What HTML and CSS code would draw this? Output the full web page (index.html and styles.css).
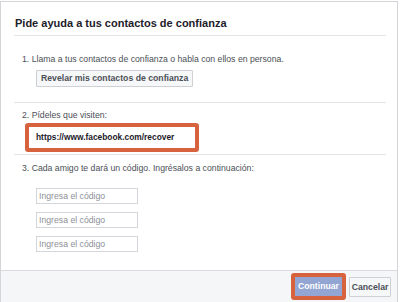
FILE: index.html
```html
<!DOCTYPE html>
<html lang="es">
<head>
  <meta charset="UTF-8" />
  <meta name="viewport" content="width=device-width, initial-scale=1.0"/>
  <title>Pide ayuda a tus contactos de confianza</title>
  <link rel="stylesheet" href="styles.css">
</head>
<body>
  <div class="dialog">
    <div class="dialog-body">
      <h2 class="title">Pide ayuda a tus contactos de confianza</h2>

      <div class="step step-one">
        <p>1. Llama a tus contactos de confianza o habla con ellos en persona.</p>
        <button class="btn reveal">Revelar mis contactos de confianza</button>
      </div>

      <div class="step step-two">
        <p>2. Pídeles que visiten:</p>
        <div class="mark url-mark">
          <div class="url">https://www.facebook.com/recover</div>
        </div>
      </div>

      <div class="step step-three">
        <p>3. Cada amigo te dará un código. Ingrésalos a continuación:</p>
        <div class="codes">
          <input type="text" placeholder="Ingresa el código" />
          <input type="text" placeholder="Ingresa el código" />
          <input type="text" placeholder="Ingresa el código" />
        </div>
      </div>
    </div>

    <div class="dialog-footer">
      <div class="mark btn-mark">
        <button class="btn primary">Continuar</button>
      </div>
      <button class="btn cancel">Cancelar</button>
    </div>
  </div>
</body>
</html>
```

FILE: styles.css
```css
body { font-family: "Liberation Sans", Arial, sans-serif; background: #fff; margin: 0; color: #4b4f56; }

.dialog {
  width: 398px; box-sizing: border-box; margin-top: 1px; height: 301px;
  border: 1px solid #d3d5d8; border-bottom: none; background: #fff;
  display: flex; flex-direction: column;
}
.dialog-body { padding: 0 11px 0 13px; flex: 1; }

.title {
  margin: 0; padding: 13px 0 4px 1px; font-size: 11px; line-height: 16px;
  font-weight: bold; color: #1d2129; border-bottom: 1px solid #e2e4e7;
}

.step { padding-left: 8px; }
.step p { margin: 0; font-size: 8.7px; line-height: 12px; }

.step-one { padding-top: 17px; padding-bottom: 15px; border-bottom: 1px solid #e2e4e7; }
.step-two { padding-top: 6px; padding-bottom: 2px; border-bottom: 1px solid #e2e4e7; }
.step-three { padding-top: 7px; }

.btn {
  font-family: inherit; font-weight: bold; font-size: 8.7px; cursor: pointer;
  border: 1px solid #ced0d4; background: #f6f7f9; color: #4b4f56;
  padding: 0 4px; height: 17px; line-height: 15px; border-radius: 1px;
  white-space: nowrap;
}
.reveal { display: block; margin: 5px 0 0 14px; }

.mark { border: 4px solid #d6623e; border-radius: 3px; }
.url-mark { margin: 2px 0 0 3px; width: 166px; }
.url {
  height: 21px; line-height: 20px; padding-left: 7px; white-space: nowrap;
  font-size: 8.4px; font-weight: bold; color: #1d2129;
}

.codes { display: flex; flex-direction: column; gap: 8px; padding: 14px 0 0 14px; }
.codes input {
  width: 102px; height: 16px; box-sizing: border-box; margin: 0;
  border: 1px solid #d3d6db; padding: 0 2px; font-family: inherit;
  font-size: 8.7px; color: #1d2129; outline: none;
}
.codes input::placeholder { color: #8d9096; }

.dialog-footer {
  height: 32px; box-sizing: border-box; border-top: 1px solid #d8dadd;
  background: #f5f6f7; display: flex; justify-content: flex-end;
  align-items: center; gap: 3px; padding-right: 6px;
}
.btn-mark { padding: 0; }
.primary {
  display: block; background: #93a6d3; border-color: #93a6d3; color: #fff;
  width: 47px; height: 19px; line-height: 17px; padding: 0; border-radius: 0;
}
.cancel { width: 42px; height: 20px; line-height: 18px; padding: 0; }
```
